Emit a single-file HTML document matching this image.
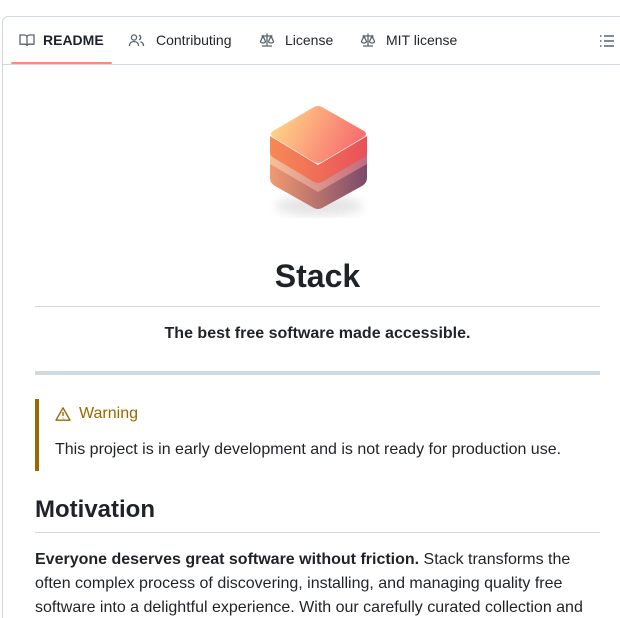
<!DOCTYPE html>
<html style="width:620px;height:618px;overflow:hidden"><head><style>
*{margin:0;padding:0;box-sizing:border-box}
body{width:620px;height:618px;overflow:hidden;background:#fff;font-family:"Liberation Sans",Arial,sans-serif;color:#1f2328;position:relative}
.card{position:absolute;left:2px;top:16px;width:618px;height:602px;border:1px solid #d1d9e0;border-right:none;border-bottom:none;border-radius:6px 0 0 0}
.tabs{position:absolute;left:0;top:0;right:0;height:48px;border-bottom:1px solid #d1d9e0}
.t{position:absolute;top:16px;font-size:14px;line-height:16px;color:#1f2328;white-space:nowrap}
.a{position:absolute;font-size:16px;white-space:nowrap}
svg{position:absolute}
</style></head><body>
<div class="card">
 <div class="tabs"></div>
 <div style="position:absolute;left:8px;top:45px;width:101px;height:2px;background:#fd8c73;border-radius:2px"></div>
</div>
<svg style="left:18px;top:32px" width="18" height="16" viewBox="0 0 16 16" fill="none" stroke="#59636e" stroke-width="1.3"><path d="M1 3h4.5c1.3 0 2.5 1 2.5 2.3V14c0-1-1-1.8-2.2-1.8H1zM15 3h-4.5C9.2 3 8 4 8 5.3V14c0-1 1-1.8 2.2-1.8H15z"/></svg>
<div class="t" style="left:43px;top:32px;font-weight:bold">README</div>
<svg style="left:128px;top:32px" width="17" height="16" viewBox="0 0 16 16" fill="none" stroke="#59636e" stroke-width="1.3"><circle cx="5.5" cy="5.5" r="2.6"/><path d="M1 14c0-3 2-4.5 4.5-4.5S10 11 10 14M10.5 3.2a2.4 2.4 0 010 4.6M12 9.8c1.8.6 3 2 3 4.2"/></svg>
<div class="t" style="left:156px;top:32px">Contributing</div>
<svg style="left:259px;top:32px" width="16" height="16" viewBox="0 0 16 16" fill="none" stroke="#59636e" stroke-width="1.3"><path d="M8 1.5v12M3 14h10M2.5 4h11M4 4L1.5 9.5a2.5 1.5 0 005 0zM12 4l-2.5 5.5a2.5 1.5 0 005 0z"/></svg>
<div class="t" style="left:285px;top:32px">License</div>
<svg style="left:360px;top:32px" width="16" height="16" viewBox="0 0 16 16" fill="none" stroke="#59636e" stroke-width="1.3"><path d="M8 1.5v12M3 14h10M2.5 4h11M4 4L1.5 9.5a2.5 1.5 0 005 0zM12 4l-2.5 5.5a2.5 1.5 0 005 0z"/></svg>
<div class="t" style="left:386px;top:32px">MIT license</div>
<svg style="left:599px;top:33px" width="16" height="16" viewBox="0 0 16 16" fill="none" stroke="#59636e" stroke-width="1.4"><path d="M1 3h1.5M1 8h1.5M1 13h1.5M5 3h10M5 8h10M5 13h10"/></svg>

<svg style="left:258px;top:98px" width="122" height="126" viewBox="0 0 122 126">
<defs>
<linearGradient id="g1" x1="0" y1="0" x2="1" y2="0.3"><stop offset="0" stop-color="#ffe08a"/><stop offset="1" stop-color="#f87070"/></linearGradient>
<linearGradient id="g2" x1="0" y1="0" x2="1" y2="0"><stop offset="0" stop-color="#f78a55"/><stop offset="1" stop-color="#e8505a"/></linearGradient>
<linearGradient id="g3" x1="0" y1="0" x2="1" y2="0"><stop offset="0" stop-color="#f6c09a"/><stop offset="1" stop-color="#c06a80"/></linearGradient>
<linearGradient id="g4" x1="0" y1="0" x2="1" y2="0"><stop offset="0" stop-color="#f29a70"/><stop offset="1" stop-color="#7a4a6a"/></linearGradient>
<filter id="s"><feGaussianBlur stdDeviation="5"/></filter>
</defs>
<ellipse cx="61" cy="108" rx="44" ry="10" fill="#000" opacity=".10" filter="url(#s)"/>
<path d="M12 80Q12 85 17 88L56 110Q60 112 64 110L104 88Q109 85 109 80V62L60 91L12 62z" fill="url(#g4)"/>
<path d="M12 66L60 94L109 66V52L60 81L12 52z" fill="url(#g3)"/>
<path d="M12 38L60 67L109 38V54Q109 58 105 60L64 84Q60 86 56 84L16 60Q12 58 12 54z" fill="url(#g2)"/>
<path d="M56 9Q60 7 64 9L106 33Q110 36 106 39L64 64Q60 66 56 64L15 39Q11 36 15 33z" fill="url(#g1)"/>
</svg>

<div class="a" style="left:35px;width:565px;top:257px;text-align:center;font-size:32px;font-weight:bold;line-height:38px">Stack</div>
<div style="position:absolute;left:35px;top:306px;width:565px;height:1px;background:#d1d9e0"></div>
<div class="a" style="left:35px;width:565px;top:325px;text-align:center;font-weight:bold">The best free software made accessible.</div>
<div style="position:absolute;left:35px;top:371px;width:565px;height:4px;background:#d1d9e0"></div>
<div style="position:absolute;left:35px;top:399px;width:4px;height:72px;background:#9a6700"></div>
<svg style="left:55px;top:406px" width="16" height="16" viewBox="0 0 16 16" fill="none" stroke="#9a6700" stroke-width="1.4"><path d="M8 1.8L1 14.2h14z" stroke-linejoin="round"/><path d="M8 6v4M8 11.8v.6"/></svg>
<div class="a" style="left:79px;top:405px;color:#9a6700">Warning</div>
<div class="a" style="left:55px;top:441px">This project is in early development and is not ready for production use.</div>
<div class="a" style="left:35px;top:496px;font-size:24px;font-weight:bold;line-height:28px">Motivation</div>
<div style="position:absolute;left:35px;top:532px;width:565px;height:1px;background:#d1d9e0"></div>
<div class="a" style="left:35px;top:548px;width:570px;white-space:normal;line-height:24px;height:70px;overflow:hidden"><b>Everyone deserves great software without friction.</b> Stack transforms the often complex process of discovering, installing, and managing quality free software into a delightful experience. With our carefully curated collection and</div>
</body></html>
